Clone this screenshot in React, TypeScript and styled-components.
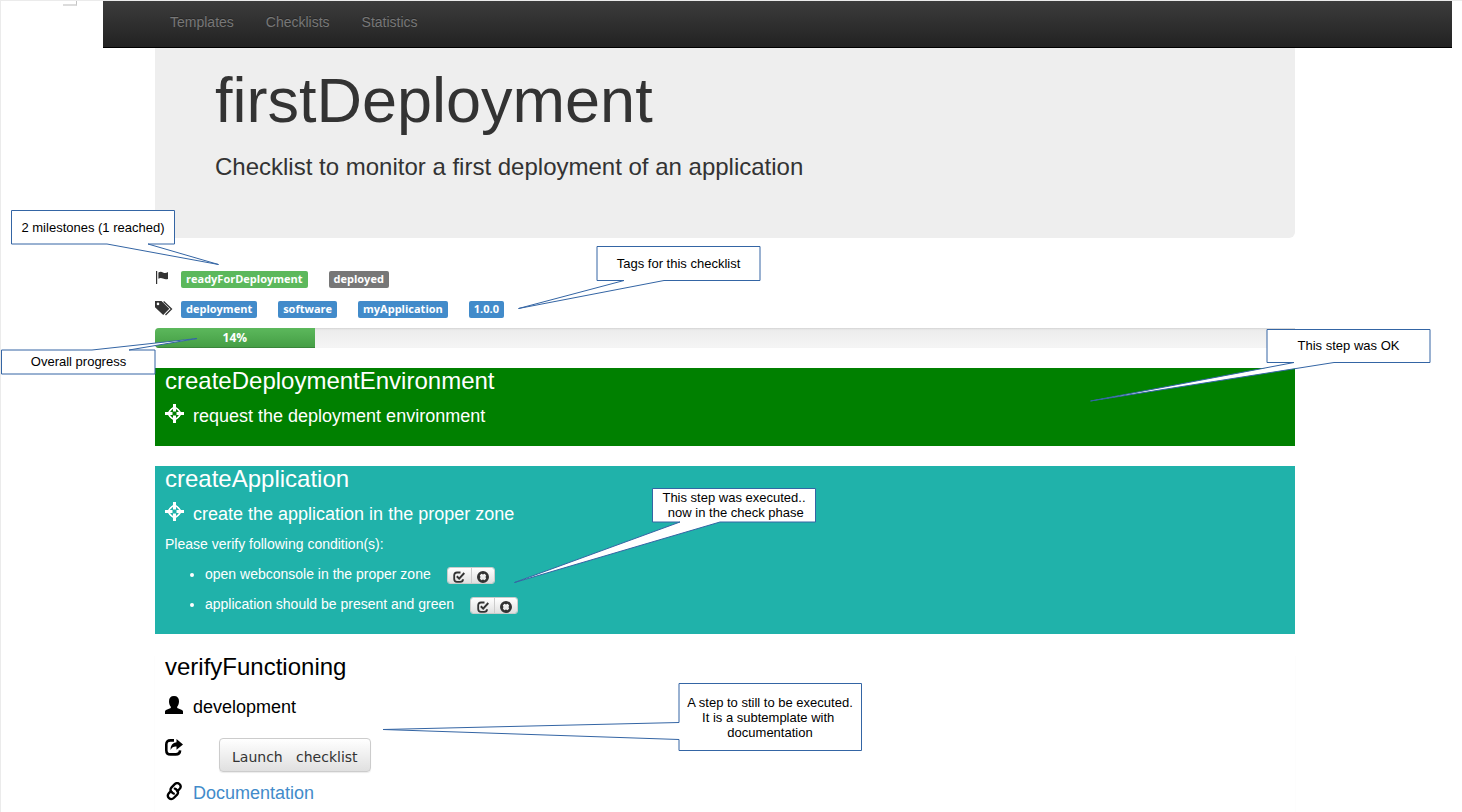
import React from "react";
import styled, { createGlobalStyle } from "styled-components";

const sans = `"Liberation Sans", Arial, sans-serif`;

const GlobalStyle = createGlobalStyle`
  *, *::before, *::after { box-sizing: border-box; }
  body { margin: 0; background: #fff; color: #333; font: 14px/20px ${sans}; }
  h1, h2, h3, p, ul { margin: 0; font-weight: 400; }
`;

const Page = styled.div`
  position: relative;
  min-height: 100vh;
  overflow: hidden;
  padding: 0 10px 0 102px;
  border-top: 1px solid #ebebeb;
  border-left: 1px solid #ebebeb;
`;

const Corner = styled.div`
  position: absolute;
  top: -1px;
  left: 62px;
  width: 14px;
  height: 6px;
  border-right: 1px solid #c4c4c4;
  border-bottom: 2px solid #dcdcdc;
`;

const NavBar = styled.nav`
  display: flex;
  gap: 32px;
  height: 47px;
  padding: 11px 67px;
  background: linear-gradient(#3c3c3c, #222);
  border-bottom: 1px solid #000;
`;

const NavLink = styled.a`
  color: #777;
  text-decoration: none;
  text-shadow: 0 -1px 0 rgba(0, 0, 0, 0.25);
`;

const Container = styled.main`
  margin: 0 157px 0 52px;
`;

const Jumbotron = styled.header`
  padding: 21px 60px 54px;
  background: #eee;
  border-radius: 0 0 6px 0;
`;

const Title = styled.h1`
  font-size: 63px;
  line-height: 63px;
`;

const Lead = styled.p`
  margin-top: 18px;
  font-size: 24px;
  line-height: 34px;
`;

const MetaRows = styled.div`
  display: flex;
  flex-direction: column;
  gap: 11px;
  padding: 32px 0 9px;
`;

const MetaRow = styled.div`
  display: flex;
  align-items: center;
  gap: 21px;
  height: 19px;
`;

const MetaIcon = styled.svg`
  width: 18px;
  height: 18px;
  margin-right: -13px;
  fill: currentColor;
`;

const Label = styled.span<{ $tone: string }>`
  padding: 0 5px 2px;
  border-radius: 2px;
  background: ${(p) => p.$tone};
  color: #fff;
  font: 700 11px/15px "Open Sans", "Noto Sans", sans-serif;
`;

const Progress = styled.div`
  height: 20px;
  margin-bottom: 20px;
  overflow: hidden;
  border-radius: 4px 0 0 4px;
  background: linear-gradient(#ebebeb, #f5f5f5);
  box-shadow: inset 0 1px 2px rgba(0, 0, 0, 0.1);
`;

const ProgressBar = styled.div`
  height: 100%;
  background: linear-gradient(#5cb85c, #449d44);
  box-shadow: inset 0 -1px 0 rgba(0, 0, 0, 0.15);
  color: #fff;
  font: 700 12px/20px "Open Sans", "Noto Sans", sans-serif;
  text-align: center;
`;

const Step = styled.section<{ $background?: string }>`
  margin-bottom: 20px;
  padding: 0 10px 20px;
  background: ${(p) => p.$background || "#fff"};
  color: ${(p) => (p.$background ? "#fff" : "#000")};
`;

const PendingStep = styled(Step)`
  margin-bottom: 0;
  padding-bottom: 8px;
  box-shadow: 0 2px 1px rgba(0, 0, 0, 0.06);
`;

const StepTitle = styled.h2`
  font-size: 24px;
  line-height: 26px;
`;

const StepRow = styled.div<{ $gap?: number }>`
  display: flex;
  gap: 9px;
  margin-top: ${(p) => p.$gap || 10}px;
`;

const StepIcon = styled.svg`
  flex: none;
  width: 19px;
  height: 19px;
  fill: currentColor;
`;

const StepText = styled.h3`
  font-size: 18px;
  line-height: 22px;
  font-weight: 500;
`;

const StepName = styled(StepText)`
  line-height: 24px;
  margin-bottom: -2px;
`;

const Paragraph = styled.p`
  margin-top: 10px;
`;

const Conditions = styled.ul`
  display: flex;
  flex-direction: column;
  gap: 10px;
  margin-top: 10px;
  padding-left: 40px;
`;

const ConditionRow = styled.div`
  display: flex;
  gap: 16px;
`;

const ButtonGroup = styled.span`
  display: flex;
  height: 17px;
  margin-top: 3px;
  overflow: hidden;
  border: 1px solid #ccc;
  border-radius: 3px;
`;

const IconButton = styled.button`
  display: flex;
  align-items: center;
  justify-content: center;
  width: 23px;
  padding: 2px 0 0;
  border: 0;
  background: linear-gradient(#fff, #e0e0e0);
  color: #333;

  & + & {
    border-left: 1px solid #ccc;
  }

  svg {
    width: 12px;
    height: 12px;
    fill: currentColor;
  }
`;

const LaunchButton = styled.button`
  height: 34px;
  margin-left: 26px;
  padding: 4px 12px 0;
  border: 1px solid #ccc;
  border-radius: 4px;
  background: linear-gradient(#fff, #e0e0e0);
  box-shadow: 0 1px 1px rgba(0, 0, 0, 0.08);
  color: #333;
  font: 14px/20px "DejaVu Sans", sans-serif;
  white-space: pre;
`;

const DocLink = styled.a`
  color: #428bca;
  text-decoration: none;
`;

const CalloutBox = styled.aside<{ $x: number; $y: number; $w: number; $h: number }>`
  position: absolute;
  left: ${(p) => p.$x - 1}px;
  top: ${(p) => p.$y - 1}px;
  width: ${(p) => p.$w}px;
  height: ${(p) => p.$h}px;
  display: flex;
  align-items: center;
  justify-content: center;
  color: #000;
  font-size: 13px;
  line-height: 15px;
  text-align: center;
  white-space: pre;
`;

const CalloutShape = styled.svg`
  position: absolute;
  inset: 0;
  width: 100%;
  height: 100%;
  overflow: visible;
  fill: #fff;
  stroke: #3465a4;
`;

const CalloutText = styled.span`
  position: relative;
`;

type CalloutProps = { x: number; y: number; w: number; h: number; points: string; text: string };

const Callout = ({ x, y, w, h, points, text }: CalloutProps) => (
  <CalloutBox $x={x} $y={y} $w={w} $h={h}>
    <CalloutShape aria-hidden="true">
      <polygon points={points} />
    </CalloutShape>
    <CalloutText>{text}</CalloutText>
  </CalloutBox>
);

const callouts: CalloutProps[] = [
  { x: 11, y: 210, w: 164, h: 35, text: "2 milestones (1 reached)", points: "0.5,0.5 163.5,0.5 163.5,34 137,34 207.5,54.5 96,34 0.5,34" },
  { x: 1, y: 349, w: 155, h: 25, text: "Overall progress", points: "0.5,1 91,1 196,-10.5 128,1 154,1 154,25 0.5,25" },
  { x: 596, y: 246, w: 165, h: 35, text: "Tags for this checklist", points: "1,0.5 164,0.5 164,34.5 68,34.5 -77.5,62.5 28,34.5 1,34.5" },
  { x: 1266, y: 328, w: 165, h: 35, text: "This step was OK", points: "1,1.5 164,1.5 164,34.5 68,34.5 -175.5,73 28,34.5 1,34.5" },
  { x: 652, y: 488, w: 164, h: 34, text: "This step was executed..\n now in the check phase", points: "0.5,0.5 163.5,0.5 163.5,34 68,34 -137.5,94.5 28,34 0.5,34" },
  { x: 678, y: 683, w: 184, h: 68, text: "A step to still to be executed.\nIt is a subtemplate with \ndocumentation", points: "1,0.5 183.5,0.5 183.5,67.5 1,67.5 1,56.5 -295,46.5 1,39.5" },
];

const TargetIcon = () => (
  <StepIcon viewBox="0 0 19 19" aria-hidden="true">
    <path d="M8 0h3v7.500H8zM8 11.500h3V19H8zM0 8h7.500v3H0zM11.500 8H19v3h-7.500z" />
    <path d="M9.500 2.800Q13.400 5.600 16.200 9.500 13.400 13.400 9.500 16.200 5.600 13.400 2.800 9.500 5.600 5.600 9.500 2.800z" fill="none" stroke="currentColor" strokeWidth="1.400" />
    <circle cx="9.500" cy="9.500" r="5.600" fill="none" stroke="currentColor" strokeWidth="1.100" />
  </StepIcon>
);

const CheckIcon = () => (
  <svg viewBox="0 0 12 12" aria-hidden="true">
    <path d="M7.500 1.500H4Q1.200 1.500 1.200 4.200V8q0 2.800 2.800 2.800h3.200Q10 10.800 10 8.200" fill="none" stroke="currentColor" strokeWidth="1.800" />
    <path d="M3.800 5.200 6.200 7.600 11.300 2" fill="none" stroke="currentColor" strokeWidth="2" />
  </svg>
);

const RemoveIcon = () => (
  <svg viewBox="0 0 12 12" aria-hidden="true">
    <path fillRule="evenodd" d="M6 0a6 6 0 1 1 0 12A6 6 0 0 1 6 0zM4.4 2.8 2.8 4.4 3.500 6l-.7 1.600 1.600 1.600L6 8.500l1.600.7 1.600-1.600L8.500 6l.7-1.600-1.600-1.600L6 3.500z" />
  </svg>
);

const Condition = ({ text }: { text: string }) => (
  <li>
    <ConditionRow>
      {text}
      <ButtonGroup>
        <IconButton type="button" aria-label="Confirm"><CheckIcon /></IconButton>
        <IconButton type="button" aria-label="Reject"><RemoveIcon /></IconButton>
      </ButtonGroup>
    </ConditionRow>
  </li>
);

export default function App() {
  return (
    <Page>
      <GlobalStyle />
      <Corner />
      <NavBar>
        <NavLink href="#templates">Templates</NavLink>
        <NavLink href="#checklists">Checklists</NavLink>
        <NavLink href="#statistics">Statistics</NavLink>
      </NavBar>
      <Container>
        <Jumbotron>
          <Title>firstDeployment</Title>
          <Lead>Checklist to monitor a first deployment of an application</Lead>
        </Jumbotron>
        <MetaRows>
          <MetaRow>
            <MetaIcon viewBox="0 0 18 18" aria-hidden="true">
              <path d="M1 0h1.200v13H1zM3.400 1.600Q5.600 0 8 1.400T13 1v7Q10.400 8.800 8 7.600T3.400 7.800z" />
            </MetaIcon>
            <Label $tone="#5cb85c">readyForDeployment</Label>
            <Label $tone="#777">deployed</Label>
          </MetaRow>
          <MetaRow>
            <MetaIcon viewBox="0 0 18 18" aria-hidden="true">
              <path fillRule="evenodd" d="M0 0h6.500l7.800 7.800L8.200 14 0 6.200zM3 1.600a1.300 1.300 0 1 0 0 2.600 1.300 1.300 0 0 0 0-2.600z" />
              <path d="M8.600.500 16.500 8l-6 6" fill="none" stroke="currentColor" strokeWidth="1.300" />
            </MetaIcon>
            <Label $tone="#428bca">deployment</Label>
            <Label $tone="#428bca">software</Label>
            <Label $tone="#428bca">myApplication</Label>
            <Label $tone="#428bca">1.0.0</Label>
          </MetaRow>
        </MetaRows>
        <Progress role="progressbar" aria-valuenow={14} aria-valuemin={0} aria-valuemax={100} aria-label="Overall progress">
          <ProgressBar style={{ width: "14%" }}>14%</ProgressBar>
        </Progress>
        <Step $background="#008000">
          <StepTitle>createDeploymentEnvironment</StepTitle>
          <StepRow>
            <TargetIcon />
            <StepName>request the deployment environment</StepName>
          </StepRow>
        </Step>
        <Step $background="#20b2aa">
          <StepTitle>createApplication</StepTitle>
          <StepRow>
            <TargetIcon />
            <StepName>create the application in the proper zone</StepName>
          </StepRow>
          <Paragraph>Please verify following condition(s):</Paragraph>
          <Conditions>
            <Condition text="open webconsole in the proper zone" />
            <Condition text="application should be present and green" />
          </Conditions>
        </Step>
        <PendingStep>
          <StepTitle>verifyFunctioning</StepTitle>
          <StepRow $gap={16}>
            <StepIcon viewBox="0 0 19 19" aria-hidden="true">
              <path d="M9 0c3.400 0 5 2 5 5.200 0 2.300-.8 4.300-1.800 5.600v1.200l4.800 2q1 .5 1 1.500V18H0v-2.500Q0 14.500 1 14l4.800-2v-1.200C4.800 9.500 4 7.500 4 5.200 4 2 5.600 0 9 0z" />
            </StepIcon>
            <StepText>development</StepText>
          </StepRow>
          <StepRow $gap={20}>
            <StepIcon viewBox="0 0 19 19" aria-hidden="true">
              <path d="M9 2.400H5.500Q1.300 2.400 1.300 6.600v5.600q0 4.200 4.200 4.200h5.200q4.200 0 4.400-4" fill="none" stroke="currentColor" strokeWidth="2.600" />
              <path d="M11.500 1l6.500 5.400-6.500 5.300V8.500q-4-.4-6 3.400Q5.500 4.800 11.500 4.200z" />
            </StepIcon>
            <LaunchButton type="button">{"Launch \u00a0 checklist"}</LaunchButton>
          </StepRow>
          <StepRow>
            <StepIcon viewBox="0 0 19 19" aria-hidden="true">
              <g fill="none" stroke="currentColor" strokeWidth="2.300" strokeLinecap="round">
                <path d="M6.200 9.600C5 8 5.400 6.800 6.400 5.600L9.500 2.400c1.600-1.600 3.600-1.600 5-.3 1.500 1.400 1.400 3.400 0 5l-2 2.200" />
                <path d="M12.200 8.400c1.300 1.700 1 3-.1 4.200L9 15.800c-1.600 1.600-3.600 1.600-5 .3-1.500-1.400-1.400-3.400 0-5l1.600-1.700" />
                <path d="M6.400 9.600q.8 1.600 2.400 2M12 8.400q-.8-1.500-2.200-1.800" />
              </g>
            </StepIcon>
            <StepText><DocLink href="#documentation">Documentation</DocLink></StepText>
          </StepRow>
        </PendingStep>
      </Container>
      {callouts.map((c) => (
        <Callout key={c.text} {...c} />
      ))}
    </Page>
  );
}
